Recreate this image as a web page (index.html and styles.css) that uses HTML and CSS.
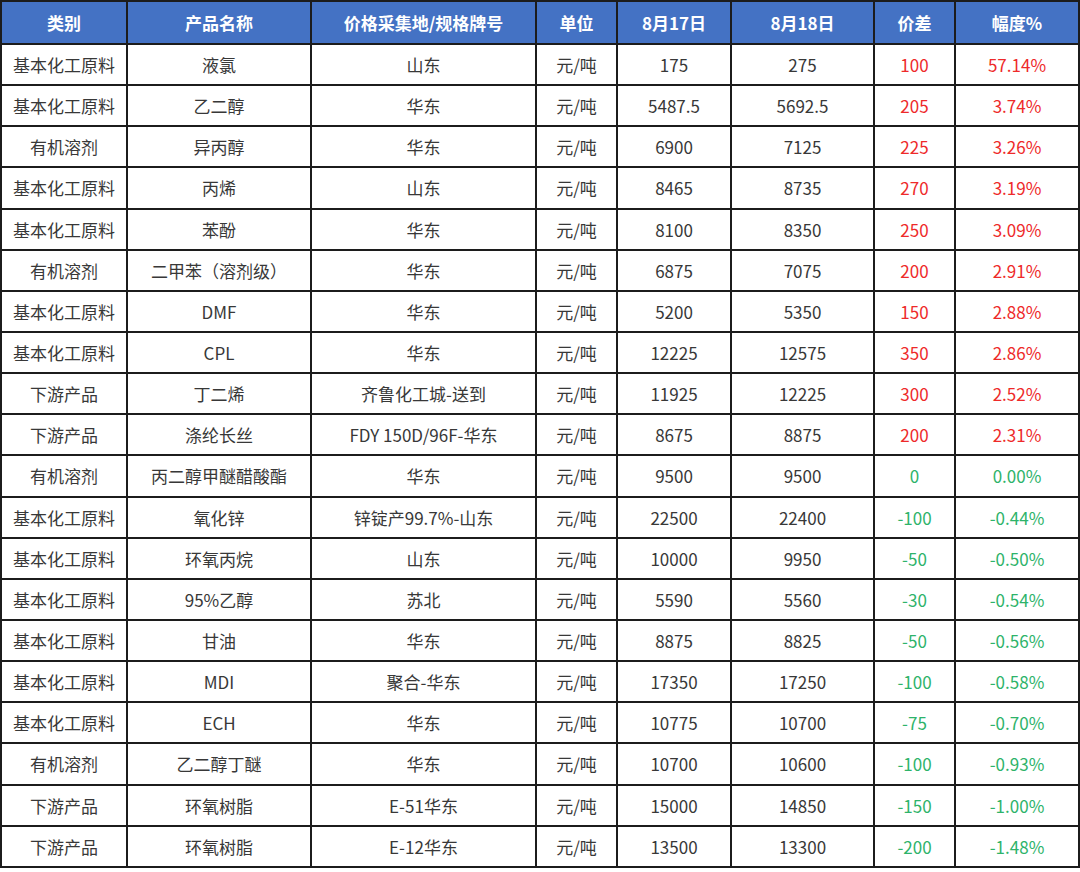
FILE: index.html
```html
<!DOCTYPE html>
<html lang="zh-CN">
<head>
<meta charset="utf-8">
<title>价格表</title>
<link rel="stylesheet" href="styles.css">
</head>
<body>
<table class="price-table">
  <colgroup>
    <col class="c1"><col class="c2"><col class="c3"><col class="c4"><col class="c5"><col class="c6"><col class="c7"><col class="c8">
  </colgroup>
  <thead>
    <tr><th>类别</th><th>产品名称</th><th>价格采集地/规格牌号</th><th>单位</th><th>8月17日</th><th>8月18日</th><th>价差</th><th>幅度%</th></tr>
  </thead>
  <tbody>
    <tr><td>基本化工原料</td><td>液氯</td><td>山东</td><td>元/吨</td><td>175</td><td>275</td><td class="up">100</td><td class="up">57.14%</td></tr>
    <tr><td>基本化工原料</td><td>乙二醇</td><td>华东</td><td>元/吨</td><td>5487.5</td><td>5692.5</td><td class="up">205</td><td class="up">3.74%</td></tr>
    <tr><td>有机溶剂</td><td>异丙醇</td><td>华东</td><td>元/吨</td><td>6900</td><td>7125</td><td class="up">225</td><td class="up">3.26%</td></tr>
    <tr><td>基本化工原料</td><td>丙烯</td><td>山东</td><td>元/吨</td><td>8465</td><td>8735</td><td class="up">270</td><td class="up">3.19%</td></tr>
    <tr><td>基本化工原料</td><td>苯酚</td><td>华东</td><td>元/吨</td><td>8100</td><td>8350</td><td class="up">250</td><td class="up">3.09%</td></tr>
    <tr><td>有机溶剂</td><td>二甲苯（溶剂级）</td><td>华东</td><td>元/吨</td><td>6875</td><td>7075</td><td class="up">200</td><td class="up">2.91%</td></tr>
    <tr><td>基本化工原料</td><td>DMF</td><td>华东</td><td>元/吨</td><td>5200</td><td>5350</td><td class="up">150</td><td class="up">2.88%</td></tr>
    <tr><td>基本化工原料</td><td>CPL</td><td>华东</td><td>元/吨</td><td>12225</td><td>12575</td><td class="up">350</td><td class="up">2.86%</td></tr>
    <tr><td>下游产品</td><td>丁二烯</td><td>齐鲁化工城-送到</td><td>元/吨</td><td>11925</td><td>12225</td><td class="up">300</td><td class="up">2.52%</td></tr>
    <tr><td>下游产品</td><td>涤纶长丝</td><td>FDY 150D/96F-华东</td><td>元/吨</td><td>8675</td><td>8875</td><td class="up">200</td><td class="up">2.31%</td></tr>
    <tr><td>有机溶剂</td><td>丙二醇甲醚醋酸酯</td><td>华东</td><td>元/吨</td><td>9500</td><td>9500</td><td class="down">0</td><td class="down">0.00%</td></tr>
    <tr><td>基本化工原料</td><td>氧化锌</td><td>锌锭产99.7%-山东</td><td>元/吨</td><td>22500</td><td>22400</td><td class="down">-100</td><td class="down">-0.44%</td></tr>
    <tr><td>基本化工原料</td><td>环氧丙烷</td><td>山东</td><td>元/吨</td><td>10000</td><td>9950</td><td class="down">-50</td><td class="down">-0.50%</td></tr>
    <tr><td>基本化工原料</td><td>95%乙醇</td><td>苏北</td><td>元/吨</td><td>5590</td><td>5560</td><td class="down">-30</td><td class="down">-0.54%</td></tr>
    <tr><td>基本化工原料</td><td>甘油</td><td>华东</td><td>元/吨</td><td>8875</td><td>8825</td><td class="down">-50</td><td class="down">-0.56%</td></tr>
    <tr><td>基本化工原料</td><td>MDI</td><td>聚合-华东</td><td>元/吨</td><td>17350</td><td>17250</td><td class="down">-100</td><td class="down">-0.58%</td></tr>
    <tr><td>基本化工原料</td><td>ECH</td><td>华东</td><td>元/吨</td><td>10775</td><td>10700</td><td class="down">-75</td><td class="down">-0.70%</td></tr>
    <tr><td>有机溶剂</td><td>乙二醇丁醚</td><td>华东</td><td>元/吨</td><td>10700</td><td>10600</td><td class="down">-100</td><td class="down">-0.93%</td></tr>
    <tr><td>下游产品</td><td>环氧树脂</td><td>E-51华东</td><td>元/吨</td><td>15000</td><td>14850</td><td class="down">-150</td><td class="down">-1.00%</td></tr>
    <tr><td>下游产品</td><td>环氧树脂</td><td>E-12华东</td><td>元/吨</td><td>13500</td><td>13300</td><td class="down">-200</td><td class="down">-1.48%</td></tr>
  </tbody>
</table>
</body>
</html>
```
FILE: styles.css
```css
html, body {
  margin: 0;
  padding: 0;
  background: #ffffff;
}
body {
  font-family: "Noto Sans CJK SC", "Noto Sans", "Liberation Sans", sans-serif;
  color: #383838;
}
.price-table {
  border-collapse: collapse;
  table-layout: fixed;
  width: 1078px;
  font-size: 17px;
  border: 2px solid #1c1c1c;
}
.c1 { width: 126px; }
.c2 { width: 184px; }
.c3 { width: 225px; }
.c4 { width: 81px; }
.c5 { width: 114px; }
.c6 { width: 143px; }
.c7 { width: 81px; }
.c8 { width: 124px; }
.price-table th,
.price-table td {
  border: 2px solid #1c1c1c;
  text-align: center;
  vertical-align: middle;
  padding: 0;
  white-space: nowrap;
  line-height: 1;
}
.price-table th {
  background: #4472c4;
  color: #ffffff;
  font-weight: bold;
  height: 41px;
  border-top-width: 1px;
}
.price-table td {
  height: 39.15px;
}
.price-table td.up { color: #ee2a2a; }
.price-table td.down { color: #2eb36a; }
```
